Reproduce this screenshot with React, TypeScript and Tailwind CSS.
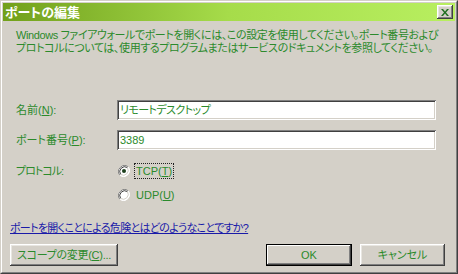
import React from 'react';

const font = "font-['Liberation_Sans','Noto_Sans_CJK_JP',sans-serif] [font-feature-settings:'palt']";
const raised =
  'shadow-[inset_-1px_-1px_0_#404040,inset_1px_1px_0_#ffffff,inset_-2px_-2px_0_#808080,inset_2px_2px_0_#e8e6e1]';
const sunken =
  'shadow-[inset_1px_1px_0_#808080,inset_-1px_-1px_0_#ffffff,inset_2px_2px_0_#404040,inset_-2px_-2px_0_#d4d0c8]';

function Mn({ label, k, rest = '' }: { label: string; k: string; rest?: string }) {
  return (
    <span>
      {label}(<span className="underline">{k}</span>){rest}
    </span>
  );
}

function Radio({ checked }: { checked?: boolean }) {
  return (
    <svg width="12" height="12" viewBox="0 0 12 12" className="shrink-0">
      <circle cx="6" cy="6" r="5.5" fill="#ffffff" />
      <path d="M10.2 1.8 A6 6 0 0 0 1.8 10.2" stroke="#808080" strokeWidth="1" fill="none" />
      <path d="M9.4 2.6 A4.9 4.9 0 0 0 2.6 9.4" stroke="#404040" strokeWidth="1" fill="none" />
      <path d="M1.8 10.2 A6 6 0 0 0 10.2 1.8" stroke="#ffffff" strokeWidth="1" fill="none" />
      <path d="M2.6 9.4 A4.9 4.9 0 0 0 9.4 2.6" stroke="#d4d0c8" strokeWidth="1" fill="none" />
      {checked && <circle cx="6" cy="6" r="2" fill="#1d401d" />}
    </svg>
  );
}

export default function App() {
  return (
    <div className={`w-[458px] h-[274px] overflow-hidden ${font} text-[11px] text-[#2b8a2b]`}>
      {/* window frame */}
      <div className="h-full border border-t-[#d4d0c8] border-l-[#d4d0c8] border-r-[#404040] border-b-[#404040] bg-[#d4d0c8]">
        <div className="h-full border border-t-white border-l-white border-r-[#808080] border-b-[#808080] p-px flex flex-col">
          {/* title bar */}
          <div className="h-[18px] shrink-0 flex items-center justify-between bg-gradient-to-r from-[#72a01a] via-[#a6dc4a] to-[#b8ef60] pl-[2px] pr-[2px]">
            <span className="text-white font-bold text-[13px] leading-none">ポートの編集</span>
            <div className={`w-[16px] h-[14px] bg-[#d4d0c8] ${raised} flex items-center justify-center`}>
              <svg width="8" height="7" viewBox="0 0 8 7">
                <path d="M0 0h2l2 2.5L6 0h2L5 3.5 8 7H6L4 4.5 2 7H0l3-3.5z" fill="#1f6f1f" />
              </svg>
            </div>
          </div>

          {/* body */}
          <div className="flex-1 flex flex-col pl-[7px] pr-[10px]">
            <div className="mt-[8px] ml-[6px] tracking-[-0.4px] whitespace-nowrap">
              <div className="h-[13px] leading-[13px]">
                Windows ファイアウォールでポートを開くには、この設定を使用してください。ポート番号および
              </div>
              <div className="h-[13px] leading-[13px]">
                プロトコルについては、使用するプログラムまたはサービスのドキュメントを参照してください。
              </div>
            </div>

            <div className="mt-[45px] ml-[6px] grid grid-cols-[101px_319px] gap-y-[10px] items-center">
              <Mn label="名前" k="N" rest=":" />
              <div className={`h-[20px] bg-white ${sunken} flex items-center px-[3px] tracking-[-0.6px]`}>
                リモートデスクトップ
              </div>
              <Mn label="ポート番号" k="P" rest=":" />
              <div className={`h-[20px] bg-white ${sunken} flex items-center px-[3px]`}>3389</div>
            </div>

            <div className="mt-[13px] ml-[6px] flex">
              <div className="w-[101px] h-[16px] flex items-center tracking-[-1px]">プロトコル:</div>
              <div className="flex flex-col gap-[8px]">
                <div className="h-[16px] flex items-center gap-[4px] pl-px">
                  <Radio checked />
                  <span className="h-[16px] flex items-center border border-dotted border-[#202020] px-px">
                    <Mn label="TCP" k="T" />
                  </span>
                </div>
                <div className="h-[16px] flex items-center gap-[5px] pl-px">
                  <Radio />
                  <span className="pl-px">
                    <Mn label="UDP" k="U" />
                  </span>
                </div>
              </div>
            </div>

            <div className="mt-[19px] h-[13px] leading-[13px] whitespace-nowrap">
              <a className="text-[#1a1aa8] underline tracking-[-0.7px] cursor-pointer">
                ポートを開くことによる危険とはどのようなことですか?
              </a>
            </div>

            <div className="mt-[9px] flex items-center">
              <button className={`w-[108px] h-[22px] bg-[#d4d0c8] ${raised} text-[#2b8a2b] tracking-[-0.3px]`}>
                <Mn label="スコープの変更" k="C" rest="..." />
              </button>
              <div className="flex-1" />
              <button className="w-[86px] h-[22px] border border-black bg-[#d4d0c8] shadow-[inset_-1px_-1px_0_#404040,inset_1px_1px_0_#ffffff,inset_-2px_-2px_0_#808080] text-[#2b8a2b]">
                OK
              </button>
              <button className={`ml-[8px] w-[85px] h-[22px] bg-[#d4d0c8] ${raised} text-[#2b8a2b]`}>
                キャンセル
              </button>
            </div>
          </div>
        </div>
      </div>
    </div>
  );
}
